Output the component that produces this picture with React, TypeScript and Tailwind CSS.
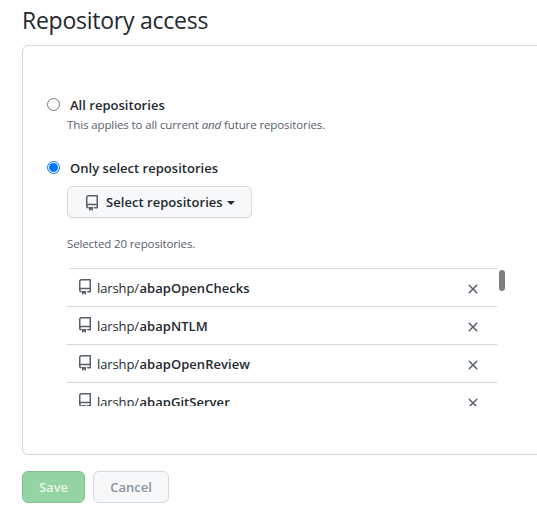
import type { ReactNode } from "react";

function RepoIcon({ className = "" }: { className?: string }) {
  return (
    <svg viewBox="0 0 16 16" className={`h-4 w-4 shrink-0 ${className}`} aria-hidden="true">
      <path
        d="M4.2 12.7A1.5 1.5 0 0 1 2.75 11.2V2.5A1.75 1.75 0 0 1 4.5.75h8.75v11.95h-2.6M2.75 11A1.6 1.6 0 0 1 4.4 9.6h8.85"
        fill="none"
        stroke="#57606a"
        strokeWidth="1.5"
        strokeLinecap="round"
        strokeLinejoin="round"
      />
      <path d="M5 12v3.5a.25.25 0 0 0 .4.2l1.45-1.09a.25.25 0 0 1 .3 0L8.6 15.7a.25.25 0 0 0 .4-.2V12z" fill="#57606a" />
    </svg>
  );
}

function CloseIcon() {
  return (
    <svg viewBox="0 0 16 16" className="h-4 w-4 fill-[#57606a]" aria-hidden="true">
      <path
        fillRule="evenodd"
        d="M3.72 3.72a.75.75 0 011.06 0L8 6.94l3.22-3.22a.75.75 0 111.06 1.06L9.06 8l3.22 3.22a.75.75 0 11-1.06 1.06L8 9.06l-3.22 3.22a.75.75 0 01-1.06-1.06L6.94 8 3.72 4.78a.75.75 0 010-1.06z"
      />
    </svg>
  );
}

function Radio({ checked = false }: { checked?: boolean }) {
  return checked ? (
    <span className="flex h-[13px] w-[13px] shrink-0 items-center justify-center rounded-full border border-[#0075ff] bg-white">
      <span className="h-[9px] w-[9px] rounded-full bg-[#0075ff]" />
    </span>
  ) : (
    <span className="h-[13px] w-[13px] shrink-0 rounded-full border border-[#767676] bg-white" />
  );
}

function Option({ checked, children }: { checked?: boolean; children: ReactNode }) {
  return (
    <label className="flex h-[21px] items-center gap-[10px] text-[13px] font-semibold leading-[21px] tracking-[0.02px]">
      <Radio checked={checked} />
      <span className="pt-[2px]">{children}</span>
    </label>
  );
}

const repos = ["abapOpenChecks", "abapNTLM", "abapOpenReview", "abapGitServer"];

export default function App() {
  return (
    <main className="h-[524px] w-full overflow-hidden bg-white pl-[22px] pt-[2px] font-['Open_Sans','Noto_Sans',sans-serif] text-[#24292f]">
      <h2 className="h-9 whitespace-nowrap text-[23px] leading-9 tracking-[-0.25px]">Repository access</h2>
      <section className="-mr-2 mt-[7px] h-[410px] rounded-md border border-[#d0d7de] pl-6 pt-12">
        <Option>All repositories</Option>
        <p className="ml-5 h-[18px] whitespace-nowrap pt-px text-[11.5px] leading-[18px] tracking-[-0.11px] text-[#57606a]">
          This applies to all current <em>and</em> future repositories.
        </p>
        <div className="mt-6">
          <Option checked>Only select repositories</Option>
        </div>
        <button className="ml-5 mt-[8px] flex h-8 w-[185px] items-center rounded-md border border-[#d5d8da] bg-[#f6f8fa] pl-4 text-[13px] font-semibold tracking-[0.04px] shadow-[0_1px_0_rgba(27,31,36,0.04)]">
          <RepoIcon className="mt-[2px]" />
          <span className="ml-[6px] w-[117px] whitespace-nowrap pt-[2px] text-left">Select repositories</span>
          <span className="ml-[4px] mt-px border-x-4 border-b-0 border-t-4 border-x-transparent border-t-[#24292f]" />
        </button>
        <p className="ml-5 mt-[17px] h-[18px] text-[11.5px] leading-[18px] tracking-[-0.13px] text-[#57606a]">Selected 20 repositories.</p>
        <div className="ml-5 mt-[15px] flex h-[138px] w-[438px] items-start overflow-hidden">
          <ul className="w-[430px]">
            {repos.map((name, i) => (
              <li key={name} className="h-[38px]">
                <div className={`h-px bg-[#d0d7de] ${i === 0 ? "ml-[3px]" : ""}`} />
                <div className="flex h-[37px] items-start pl-[10px] pr-4">
                  <RepoIcon className="mt-[10px]" />
                  <span className="ml-[4px] mt-[9px] w-[42.5px] whitespace-nowrap text-[13px] leading-[21px] tracking-[-0.1px]">larshp/</span>
                  <span className="mt-[9px] whitespace-nowrap text-[13px] font-semibold leading-[21px] tracking-[0.04px]">{name}</span>
                  <button className="ml-auto mt-[12px]" aria-label="Remove">
                    <CloseIcon />
                  </button>
                </div>
              </li>
            ))}
          </ul>
          <span className="ml-[2px] mt-[2px] h-[21px] w-[6px] rounded-full bg-[#808080]" />
        </div>
      </section>
      <div className="mt-4 flex gap-2 text-[13px] font-semibold">
        <button className="h-8 w-[63px] rounded-md border border-[#84c093] bg-[#94d3a2] pt-px text-[#eaf6ec]">Save</button>
        <button className="h-8 w-[76px] rounded-md border border-[#d5d8da] bg-[#f6f8fa] pt-px text-[#8c959f]">Cancel</button>
      </div>
    </main>
  );
}
